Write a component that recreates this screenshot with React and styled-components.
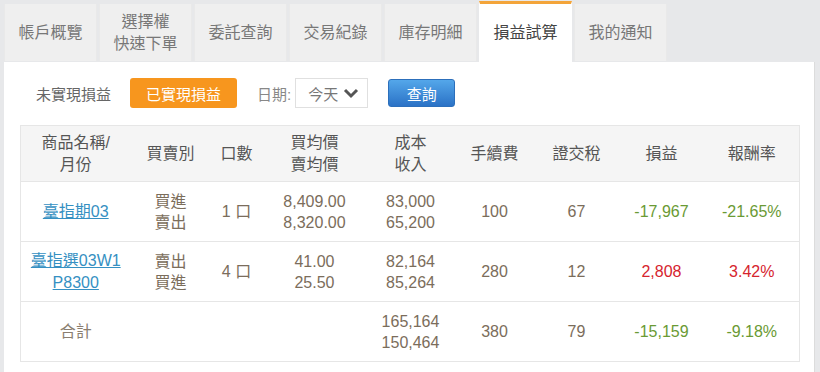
import React from "react";
import styled, { createGlobalStyle } from "styled-components";

const Global = createGlobalStyle`
  html, body { margin: 0; padding: 0; background: #e7e8ea; }
  body { font-family: "Liberation Sans", "Noto Sans CJK TC", sans-serif; }
`;

const Page = styled.div`
  padding: 1px 5px 0 4px;
  width: 820px;
  box-sizing: border-box;
`;

const TabBar = styled.div`
  display: flex;
  align-items: flex-end;
  gap: 2px;
  height: 61px;
`;

const Tab = styled.div`
  box-sizing: border-box;
  width: 93px;
  display: flex;
  align-items: center;
  justify-content: center;
  text-align: center;
  font-size: 16px;
  line-height: 22px;
  color: ${(p) => (p.$active ? "#444" : "#777")};
  background: ${(p) => (p.$active ? "#fff" : "#efefef")};
  height: ${(p) => (p.$active ? "61px" : "57px")};
  margin-bottom: ${(p) => (p.$active ? "0" : "1px")};
  border-top: ${(p) => (p.$active ? "3px solid #f3a43a" : "none")};
  border-left: 1px solid ${(p) => (p.$active ? "#fff" : "#e9e9e9")};
  border-right: 1px solid ${(p) => (p.$active ? "#fff" : "#e9e9e9")};
`;

const Panel = styled.div`
  background: #fff;
  padding: 16px 16px 11px;
  border-right: 1px solid #dcdcdc;
`;

const Controls = styled.div`
  display: flex;
  align-items: center;
  height: 30px;
`;

const Toggle = styled.div`
  height: 30px;
  padding: 0 16px;
  margin-right: 3px;
  border-radius: 3px;
  display: flex;
  align-items: center;
  font-size: 15px;
  color: ${(p) => (p.$on ? "#fff" : "#666")};
  background: ${(p) => (p.$on ? "#f7961e" : "transparent")};
`;

const Label = styled.span`
  margin-left: 17px;
  font-size: 15px;
  color: #888;
`;

const Select = styled.div`
  box-sizing: border-box;
  margin-left: 4px;
  width: 73px;
  height: 30px;
  border: 1px solid #e0e0e0;
  display: flex;
  align-items: center;
  padding-left: 12px;
  gap: 5px;
  font-size: 15px;
  color: #777;
`;

const QueryButton = styled.div`
  box-sizing: border-box;
  margin-left: 20px;
  width: 67px;
  height: 28px;
  border-radius: 3px;
  border: 1px solid #2c6fbb;
  background: linear-gradient(#54a7ea, #2b72c6);
  color: #fff;
  font-size: 15px;
  display: flex;
  align-items: center;
  justify-content: center;
`;

const Table = styled.table`
  margin-top: 17px;
  width: 100%;
  border-collapse: collapse;
  table-layout: fixed;
  border: 1px solid #e6e6e6;
  font-size: 16px;
`;

const Th = styled.th`
  height: 55px;
  padding: 0;
  font-weight: normal;
  line-height: 22px;
  color: #555;
  background: #f5f5f5;
  border-bottom: 1px solid #e6e6e6;
  text-align: center;
`;

const Td = styled.td`
  height: 59px;
  padding: 0;
  line-height: 21px;
  text-align: center;
  color: ${(p) => p.$color || "#7b6d5b"};
  border-top: 1px solid #e6e6e6;
`;

const Link = styled.a`
  color: #3590c2;
  text-decoration: underline;
  line-height: 22px;
`;

const Chevron = () => (
  <svg width="16" height="12" viewBox="0 0 16 12">
    <polyline points="2,3 8,9 14,3" fill="none" stroke="#555" strokeWidth="3" />
  </svg>
);

const GREEN = "#6a9a34";
const RED = "#d6242e";

const widths = [110, 80, 52, 104, 88, 80, 84, 86, 95];

const rows = [
  {
    name: <Link>臺指期03</Link>,
    side: ["買進", "賣出"],
    qty: "1 口",
    price: ["8,409.00", "8,320.00"],
    cost: ["83,000", "65,200"],
    fee: "100",
    tax: "67",
    pnl: "-17,967",
    rate: "-21.65%",
    color: GREEN,
  },
  {
    name: (
      <Link>
        臺指選03W1
        <br />
        P8300
      </Link>
    ),
    side: ["賣出", "買進"],
    qty: "4 口",
    price: ["41.00", "25.50"],
    cost: ["82,164", "85,264"],
    fee: "280",
    tax: "12",
    pnl: "2,808",
    rate: "3.42%",
    color: RED,
  },
];

const Two = ({ v }) => (
  <>
    {v[0]}
    <br />
    {v[1]}
  </>
);

export default function App() {
  const tabs = ["帳戶概覽", "選擇權\n快速下單", "委託查詢", "交易紀錄", "庫存明細", "損益試算", "我的通知"];
  return (
    <Page>
      <Global />
      <TabBar>
        {tabs.map((t, i) => (
          <Tab key={i} $active={i === 5}>
            <span>
              {t.split("\n").map((s, j) => (
                <React.Fragment key={j}>
                  {j > 0 && <br />}
                  {s}
                </React.Fragment>
              ))}
            </span>
          </Tab>
        ))}
      </TabBar>
      <Panel>
        <Controls>
          <Toggle>未實現損益</Toggle>
          <Toggle $on>已實現損益</Toggle>
          <Label>日期:</Label>
          <Select>
            今天
            <Chevron />
          </Select>
          <QueryButton>查詢</QueryButton>
        </Controls>
        <Table>
          <colgroup>
            {widths.map((w, i) => (
              <col key={i} style={{ width: w }} />
            ))}
          </colgroup>
          <thead>
            <tr>
              <Th>
                商品名稱/
                <br />
                月份
              </Th>
              <Th>買賣別</Th>
              <Th>口數</Th>
              <Th>
                買均價
                <br />
                賣均價
              </Th>
              <Th>
                成本
                <br />
                收入
              </Th>
              <Th>手續費</Th>
              <Th>證交稅</Th>
              <Th>損益</Th>
              <Th>報酬率</Th>
            </tr>
          </thead>
          <tbody>
            {rows.map((r, i) => (
              <tr key={i}>
                <Td>{r.name}</Td>
                <Td>
                  <Two v={r.side} />
                </Td>
                <Td>{r.qty}</Td>
                <Td>
                  <Two v={r.price} />
                </Td>
                <Td>
                  <Two v={r.cost} />
                </Td>
                <Td>{r.fee}</Td>
                <Td>{r.tax}</Td>
                <Td $color={r.color}>{r.pnl}</Td>
                <Td $color={r.color}>{r.rate}</Td>
              </tr>
            ))}
            <tr>
              <Td $color="#8a7e70">合計</Td>
              <Td />
              <Td />
              <Td />
              <Td>
                <Two v={["165,164", "150,464"]} />
              </Td>
              <Td>380</Td>
              <Td>79</Td>
              <Td $color={GREEN}>-15,159</Td>
              <Td $color={GREEN}>-9.18%</Td>
            </tr>
          </tbody>
        </Table>
      </Panel>
    </Page>
  );
}
